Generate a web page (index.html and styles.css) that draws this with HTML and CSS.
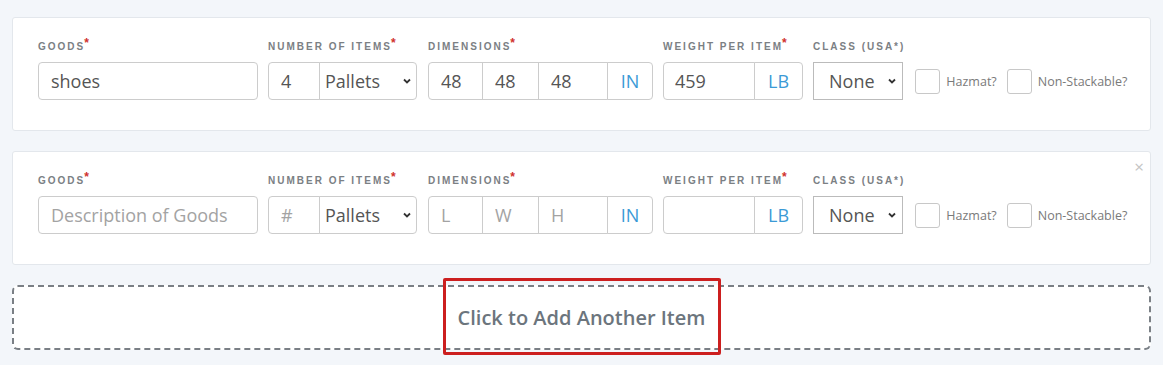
FILE: index.html
```html
<!DOCTYPE html>
<html lang="en">
<head>
  <meta charset="UTF-8" />
  <title>Shipment Items</title>
  <link rel="stylesheet" href="styles.css">
</head>
<body>

  <div class="item-card">
    <div class="field">
      <label class="field-label">Goods<sup>*</sup></label>
      <input type="text" class="ctrl goods" value="shoes" placeholder="Description of Goods">
    </div>
    <div class="field">
      <label class="field-label">Number of Items<sup>*</sup></label>
      <div class="group">
        <input type="text" class="ctrl qty" value="4" placeholder="#">
        <div class="select-wrap pallets">
          <select class="ctrl"><option>Pallets</option></select>
          <svg class="chev" width="10" height="10" viewBox="0 0 10 10"><path d="M2 3.5 L5 6.5 L8 3.5" fill="none" stroke="#333" stroke-width="1.8"/></svg>
        </div>
      </div>
    </div>
    <div class="field">
      <label class="field-label">Dimensions<sup>*</sup></label>
      <div class="group">
        <input type="text" class="ctrl dim-l" value="48" placeholder="L">
        <input type="text" class="ctrl dim-w" value="48" placeholder="W">
        <input type="text" class="ctrl dim-h" value="48" placeholder="H">
        <span class="unit unit-in">IN</span>
      </div>
    </div>
    <div class="field">
      <label class="field-label">Weight per Item<sup>*</sup></label>
      <div class="group">
        <input type="text" class="ctrl weight" value="459">
        <span class="unit unit-lb">LB</span>
      </div>
    </div>
    <div class="field">
      <label class="field-label">Class (USA*)</label>
      <div class="select-wrap klass">
        <select class="ctrl"><option>None</option></select>
        <svg class="chev" width="10" height="10" viewBox="0 0 10 10"><path d="M2 3.5 L5 6.5 L8 3.5" fill="none" stroke="#333" stroke-width="1.8"/></svg>
      </div>
    </div>
    <label class="check"><span class="box"></span>Hazmat?</label>
    <label class="check"><span class="box"></span>Non-Stackable?</label>
  </div>

  <div class="item-card">
    <span class="close">&times;</span>
    <div class="field">
      <label class="field-label">Goods<sup>*</sup></label>
      <input type="text" class="ctrl goods" placeholder="Description of Goods">
    </div>
    <div class="field">
      <label class="field-label">Number of Items<sup>*</sup></label>
      <div class="group">
        <input type="text" class="ctrl qty" placeholder="#">
        <div class="select-wrap pallets">
          <select class="ctrl"><option>Pallets</option></select>
          <svg class="chev" width="10" height="10" viewBox="0 0 10 10"><path d="M2 3.5 L5 6.5 L8 3.5" fill="none" stroke="#333" stroke-width="1.8"/></svg>
        </div>
      </div>
    </div>
    <div class="field">
      <label class="field-label">Dimensions<sup>*</sup></label>
      <div class="group">
        <input type="text" class="ctrl dim-l" placeholder="L">
        <input type="text" class="ctrl dim-w" placeholder="W">
        <input type="text" class="ctrl dim-h" placeholder="H">
        <span class="unit unit-in">IN</span>
      </div>
    </div>
    <div class="field">
      <label class="field-label">Weight per Item<sup>*</sup></label>
      <div class="group">
        <input type="text" class="ctrl weight">
        <span class="unit unit-lb">LB</span>
      </div>
    </div>
    <div class="field">
      <label class="field-label">Class (USA*)</label>
      <div class="select-wrap klass">
        <select class="ctrl"><option>None</option></select>
        <svg class="chev" width="10" height="10" viewBox="0 0 10 10"><path d="M2 3.5 L5 6.5 L8 3.5" fill="none" stroke="#333" stroke-width="1.8"/></svg>
      </div>
    </div>
    <label class="check"><span class="box"></span>Hazmat?</label>
    <label class="check"><span class="box"></span>Non-Stackable?</label>
  </div>

  <div class="add-item">
    <span class="highlight"></span>
    Click to Add Another Item
  </div>

</body>
</html>
```

FILE: styles.css
```css
* {
  box-sizing: border-box;
}

body {
  margin: 0;
  padding: 17px 12px 20px;
  background: #f3f6fa;
  font-family: 'Open Sans', sans-serif;
  color: #555;
}

.item-card {
  position: relative;
  display: flex;
  align-items: flex-end;
  gap: 10px;
  background: #fff;
  border: 1px solid #e3e7ec;
  border-radius: 3px;
  padding: 22px 20px 30px 25px;
  height: 114px;
  margin-bottom: 20px;
}

.field {
  display: flex;
  flex-direction: column;
}

.field-label {
  font-family: 'Liberation Sans', Arial, sans-serif;
  font-size: 10px;
  font-weight: bold;
  letter-spacing: 2px;
  text-transform: uppercase;
  color: #7b8084;
  line-height: 14px;
  margin-bottom: 8px;
  white-space: nowrap;
}

.field-label sup {
  color: #d0312d;
  font-size: 12px;
  line-height: 0;
  letter-spacing: 0;
  margin-left: -1px;
  position: relative;
  top: 1px;
}

.ctrl {
  height: 38px;
  border: 1px solid #ccc;
  font-family: 'Open Sans', sans-serif;
  font-size: 18px;
  color: #555;
  padding: 0 12px;
  background: #fff;
  outline: none;
}

.ctrl::placeholder {
  color: #a3a3a3;
}

input.goods {
  width: 220px;
  border-radius: 4px;
}

.group {
  display: flex;
}

.group .ctrl,
.group .unit {
  margin-left: -1px;
}

.group > :first-child {
  margin-left: 0;
  border-radius: 4px 0 0 4px;
}

.group > :last-child,
.group > :last-child .ctrl {
  border-radius: 0 4px 4px 0;
}

input.qty { width: 53px; padding-left: 12px; }
input.dim-l { width: 55px; }
input.dim-w { width: 57px; }
input.dim-h { width: 70px; }
input.weight { width: 92px; padding-left: 11px; }

.unit {
  height: 38px;
  border: 1px solid #ccc;
  display: flex;
  align-items: center;
  justify-content: center;
  font-size: 18px;
  color: #3b9ad6;
  background: #fff;
}

.unit-in { width: 46px; }
.unit-lb { width: 49px; }

.select-wrap {
  position: relative;
}

.select-wrap select {
  appearance: none;
  -webkit-appearance: none;
  width: 100%;
  padding: 0 24px 0 5px;
}

.select-wrap .chev {
  position: absolute;
  right: 6px;
  top: 14px;
  pointer-events: none;
}

.pallets { width: 98px; margin-left: -1px; }

.klass { width: 90px; }

.klass select {
  border-color: #bbb;
  border-radius: 0;
  padding-left: 15px;
}

.check {
  display: flex;
  align-items: center;
  gap: 6px;
  height: 38px;
  font-size: 12.5px;
  color: #7a7a7a;
  white-space: nowrap;
}

.box {
  width: 25px;
  height: 25px;
  border: 1px solid #c8c8c8;
  border-radius: 3px;
  background: #fff;
}

.close {
  position: absolute;
  top: 3px;
  right: 6px;
  font-size: 17px;
  color: #c4c4c4;
}

.add-item {
  position: relative;
  height: 65px;
  background: #fff;
  border: 2px dashed #7a7f85;
  border-radius: 6px;
  display: flex;
  align-items: center;
  justify-content: center;
  font-size: 20px;
  font-weight: 600;
  color: #6c757d;
}

.highlight {
  position: absolute;
  top: -9px;
  bottom: -7px;
  left: 50%;
  width: 278px;
  margin-left: -139px;
  border: 3px solid #cc1f1f;
  border-radius: 2px;
}
```
